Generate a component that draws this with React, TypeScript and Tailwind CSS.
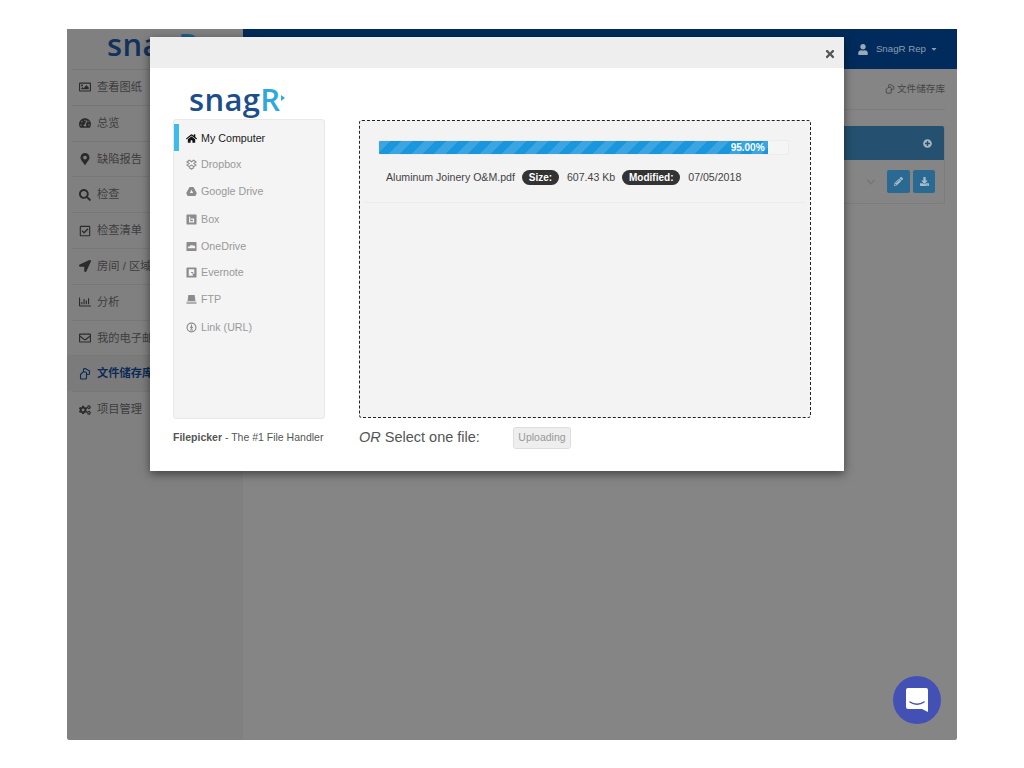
import React from "react";
import {
  FaRegImage, FaTachometerAlt, FaMapMarkerAlt, FaSearch, FaRegCheckSquare, FaLocationArrow,
  FaRegChartBar, FaRegEnvelope, FaCogs, FaUser, FaCaretDown, FaPlusCircle, FaPencilAlt, FaDownload,
  FaChevronDown, FaHome, FaTimes,
} from "react-icons/fa";

const CJK = "font-['Liberation_Sans','Noto_Sans_CJK_SC',sans-serif]";

type IconT = React.ComponentType<{ className?: string }>;

const FilesIcon: IconT = ({ className }) => (
  <svg viewBox="0 0 12 12" fill="none" stroke="currentColor" strokeWidth="1.1" className={className}>
    <path d="M4.5 4V1.6a1 1 0 0 1 1-1h.8L10.5 3v2.5a1 1 0 0 1-1 1H8" />
    <path d="M1.5 6.5 4 4h2.5a1 1 0 0 1 1 1v5a1 1 0 0 1-1 1h-4a1 1 0 0 1-1-1z" />
  </svg>
);

const DropboxIcon: IconT = ({ className }) => (
  <svg viewBox="0 0 12 12" fill="none" stroke="currentColor" strokeWidth="1.2" className={className}>
    <path d="M1 3.2 3.6 1.4 6 3l2.4-1.6L11 3.2 8.6 5 11 6.6 8.6 8.3 6 6.6 3.4 8.3 1 6.6 3.4 5z" />
    <path d="M3.2 9.3 6 11l2.8-1.7" />
  </svg>
);
const DriveIcon: IconT = ({ className }) => (
  <svg viewBox="0 0 12 12" className={className}>
    <path d="M4.4 1h3.2a.8.8 0 0 1 .7.4l3.3 6a.8.8 0 0 1 0 .8L10.4 10.6a.8.8 0 0 1-.7.4H2.3a.8.8 0 0 1-.7-.4L.4 8.2a.8.8 0 0 1 0-.8l3.3-6A.8.8 0 0 1 4.4 1z" fill="currentColor" />
    <path d="M6 4 4.2 7.6h3.6z" fill="#f4f4f4" />
  </svg>
);
const BoxIcon: IconT = ({ className }) => (
  <svg viewBox="0 0 12 12" className={className}>
    <rect x="0.5" y="0.5" width="11" height="11" rx="1" fill="currentColor" />
    <path d="M4 3v5.5h4.2V5.6H5.2" fill="none" stroke="#f4f4f4" strokeWidth="1.3" />
  </svg>
);
const OneDriveIcon: IconT = ({ className }) => (
  <svg viewBox="0 0 12 12" className={className}>
    <rect x="0.5" y="1" width="11" height="10" rx="1" fill="currentColor" />
    <path d="M2 7.5c0-1.4 1.2-1.7 1.9-1.5C4.3 4.6 6.3 4 7.4 5c1-.5 2.6.2 2.6 1.5V8H2z" fill="#f4f4f4" />
  </svg>
);
const EvernoteIcon: IconT = ({ className }) => (
  <svg viewBox="0 0 12 12" className={className}>
    <rect x="0.5" y="0.5" width="11" height="11" rx="1" fill="currentColor" />
    <path d="M3 2.5h6v5H7.5v2H3z" fill="#f4f4f4" />
    <path d="M5.5 6h2v2" fill="none" stroke="currentColor" />
  </svg>
);
const FtpIcon: IconT = ({ className }) => (
  <svg viewBox="0 0 12 12" className={className}>
    <path d="M2.5 1h7l.8 6.5H1.7z" fill="currentColor" />
    <rect x="0.5" y="8.2" width="11" height="2.8" rx="0.5" fill="currentColor" opacity="0.65" />
  </svg>
);
const LinkIcon: IconT = ({ className }) => (
  <svg viewBox="0 0 12 12" fill="none" stroke="currentColor" className={className}>
    <circle cx="6" cy="6" r="4.8" strokeWidth="1.3" />
    <path d="M6 2.8v4M4.6 5.4 6 7l1.4-1.6M4.3 8.8h3.4" strokeWidth="1.1" />
  </svg>
);

const nav: [IconT, string][] = [
  [FaRegImage, "查看图纸"],
  [FaTachometerAlt, "总览"],
  [FaMapMarkerAlt, "缺陷报告"],
  [FaSearch, "检查"],
  [FaRegCheckSquare, "检查清单"],
  [FaLocationArrow, "房间 / 区域"],
  [FaRegChartBar, "分析"],
  [FaRegEnvelope, "我的电子邮件"],
  [FilesIcon, "文件储存库"],
  [FaCogs, "项目管理"],
];

const sources: [IconT, string, string][] = [
  [FaHome, "My Computer", "h-[27px] pt-[1px]"],
  [DropboxIcon, "Dropbox", "h-[27px]"],
  [DriveIcon, "Google Drive", "h-[27px]"],
  [BoxIcon, "Box", "h-[28px]"],
  [OneDriveIcon, "OneDrive", "h-[26px]"],
  [EvernoteIcon, "Evernote", "h-[26px]"],
  [FtpIcon, "FTP", "h-[28px]"],
  [LinkIcon, "Link (URL)", "h-[28px]"],
];

function Logo({ dim }: { dim?: boolean }) {
  const r = dim ? "text-[#1b5f86]" : "text-[#2fa8dc]";
  return (
    <div
      className={`flex items-center font-['Open_Sans',sans-serif] font-semibold tracking-[0.3px] leading-none text-[31px] ${
        dim ? "text-[#12315c]" : "text-[#1c4f8a]"
      }`}
    >
      snag<span className={r}>R</span>
      <svg width="4" height="6" viewBox="0 0 4 6" className={`ml-[1px] mt-[-4px] ${r}`}>
        <path d="M0 0l4 3-4 3z" fill="currentColor" />
      </svg>
    </div>
  );
}

export default function App() {
  return (
    <div className={`relative w-[1024px] h-[768px] bg-white pt-[29px] pl-[67px] overflow-hidden ${CJK}`}>
      <div className="flex w-[890px] h-[711px] bg-[#858585] rounded-b-[3px] overflow-hidden">
        <aside className="w-[176px] shrink-0 bg-[#808080]">
          <div className="h-[40px] pl-[40px] overflow-hidden">
            <Logo dim />
          </div>
          <nav>
            {nav.map(([Icon, label], i) => {
              const active = i === 8;
              return (
                <div key={label} className={active ? "bg-[#7b7b7b]" : ""}>
                  <div
                    className={`flex items-center h-[35.8px] ml-[5px] mr-[5px] pl-[7px] border-t border-[#777] text-[11.25px] whitespace-nowrap ${
                      active ? "text-[#0a2a55] font-bold" : "text-[#3d3d3d]"
                    }`}
                  >
                    <Icon className={`w-[12px] h-[12px] mr-[6px] shrink-0 ${active ? "text-[#0a2a55]" : "text-[#2b2b2b]"}`} />
                    {label}
                  </div>
                </div>
              );
            })}
          </nav>
        </aside>
        <main className="flex-1 flex flex-col bg-[#858585]">
          <header className="h-[40px] bg-[#002b5c] flex items-center justify-end pr-[19px] text-[9.7px] text-[#8d9db0]">
            <FaUser className="w-[10px] h-[11px] mr-[8px] text-[#9aa8b8]" />
            SnagR Rep
            <FaCaretDown className="w-[8px] h-[8px] ml-[4px]" />
          </header>
          <div className="h-[41px] mx-[12px] border-b border-[#7c7c7c] flex items-center justify-end text-[9.6px] text-[#444]">
            <FilesIcon className="w-[10px] h-[10px] mr-[2px]" />
            文件储存库
          </div>
          <section className="mt-[16px] mx-[12px] border border-[#7c7c7c] border-t-0 h-[78px] rounded-[2px]">
            <div className="h-[34px] bg-[#25506f] rounded-t-[2px] flex items-center justify-end pr-[12px] text-[#a5b6c2]">
              <FaPlusCircle className="w-[9px] h-[9px]" />
            </div>
            <div className="flex items-center justify-end h-[43px] pr-[9px] gap-[3px]">
              <FaChevronDown className="w-[10px] h-[10px] mr-[8px] text-[#777]" />
              <span className="w-[23px] h-[23px] rounded-[2px] bg-[#2a6a92] flex items-center justify-center text-[#a8bccb]">
                <FaPencilAlt className="w-[9px] h-[9px]" />
              </span>
              <span className="w-[22px] h-[23px] rounded-[2px] bg-[#2a6a92] flex items-center justify-center text-[#a8bccb]">
                <FaDownload className="w-[9px] h-[9px]" />
              </span>
            </div>
          </section>
        </main>
      </div>

      {/* modal */}
      <div className="absolute left-[150px] top-[37px] w-[694px] h-[434px] bg-white shadow-[0_3px_9px_rgba(0,0,0,0.5)] flex flex-col">
        <div className="h-[31px] bg-[#eeeeee] flex items-center justify-end pr-[8px]">
          <FaTimes className="w-[12px] h-[12px] text-[#555] mt-[3px]" />
        </div>
        <div className="flex pl-[23px] text-[#333]">
          <div className="w-[152px]">
            <div className="h-[51px] pl-[16px] pt-[16px]">
              <Logo />
            </div>
            <div className="h-[300px] w-[152px] bg-[#f4f4f4] border border-[#e8e8e8] rounded-[3px] pt-[4px]">
              {sources.map(([Icon, label, h], i) => (
                <div
                  key={label}
                  className={`flex items-center ${h} text-[10.7px] ${
                    i === 0 ? "border-l-[5px] border-[#3bbcea] text-[#222] pl-[6px]" : "pl-[11px] text-[#999]"
                  }`}
                >
                  <Icon className={`w-[11px] h-[11px] mr-[4px] ml-[1px] ${i === 0 ? "text-[#111]" : "text-[#8c8c8c]"}`} />
                  {label}
                </div>
              ))}
            </div>
            <div className="mt-[11px] text-[10.5px] text-[#555] whitespace-nowrap">
              <b>Filepicker</b> - The #1 File Handler
            </div>
          </div>
          <div className="ml-[34px] w-[452px]">
            <div className="mt-[52px] h-[298px] bg-[#f3f3f3] border border-dashed border-[#222] rounded-[3px] p-[4px]">
              <div className="h-[78px] border-b border-[#ececec] pt-[15px] px-[14px]">
                <div className="h-[15px] w-[411px] bg-[#f5f5f5] border border-[#ececec] rounded-[2px] overflow-hidden">
                  <div className="h-full w-[95%] flex items-center justify-end pr-[3px] text-[10px] font-bold text-white bg-[#1a96dc] bg-[repeating-linear-gradient(135deg,rgba(255,255,255,0.14)_0,rgba(255,255,255,0.14)_8px,transparent_8px,transparent_16px)]">
                    95.00%
                  </div>
                </div>
                <div className="mt-[15px] ml-[8px] flex items-center text-[10.6px] text-[#444] whitespace-nowrap">
                  Aluminum Joinery O&amp;M.pdf
                  <span className="ml-[7px] h-[15px] w-[37px] justify-center rounded-full bg-[#333] text-white font-bold text-[10px] flex items-center">Size:</span>
                  <span className="ml-[8px]">607.43 Kb</span>
                  <span className="ml-[7px] h-[15px] w-[58px] justify-center rounded-full bg-[#333] text-white font-bold text-[10px] flex items-center">Modified:</span>
                  <span className="ml-[8px]">07/05/2018</span>
                </div>
              </div>
            </div>
            <div className="mt-[9px] flex items-center h-[22px] text-[14.5px] text-[#555] whitespace-nowrap">
              <span className="w-[154px]"><i>OR</i> Select one file:</span>
              <span className="w-[58px] h-[22px] flex items-center justify-center bg-[#eeeeee] border border-[#ddd] rounded-[3px] text-[10.5px] text-[#999]">
                Uploading
              </span>
            </div>
          </div>
        </div>
      </div>

      {/* chat launcher */}
      <div className="absolute left-[893px] top-[676px] w-[48px] h-[48px] rounded-full bg-[#4351b5] flex items-center justify-center">
        <svg width="24" height="26" viewBox="0 0 24 26">
          <path d="M3 1h18a2 2 0 0 1 2 2v22l-6-3H3a2 2 0 0 1-2-2V3a2 2 0 0 1 2-2z" fill="#fff" />
          <path d="M5 15c4 3 10 3 14 0" stroke="#4351b5" strokeWidth="1.5" fill="none" strokeLinecap="round" />
        </svg>
      </div>
    </div>
  );
}
